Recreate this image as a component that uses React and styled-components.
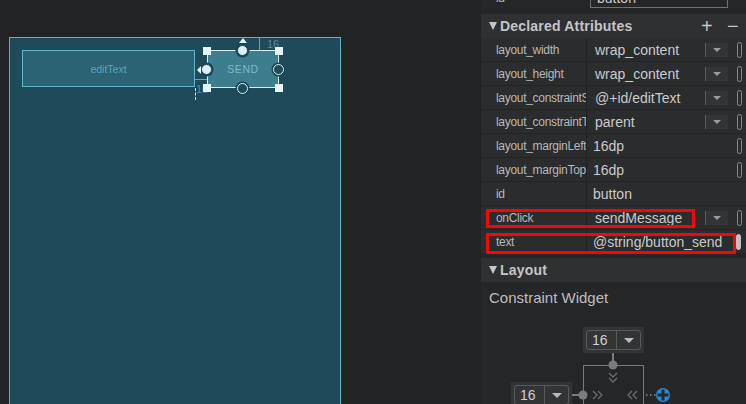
import React from "react";
import styled, { createGlobalStyle } from "styled-components";

const Global = createGlobalStyle`
  html, body { margin: 0; padding: 0; background: #222325; overflow: hidden; }
  body { font-family: "Liberation Sans", Arial, sans-serif; }
`;

const Page = styled.div`
  display: flex;
  width: 746px;
  height: 404px;
  overflow: hidden;
`;

const CanvasArea = styled.div`
  width: 481px;
  flex: none;
  background: #222325;
  padding: 37px 0 0 9px;
  box-sizing: border-box;
`;

const Blueprint = styled.div`
  position: relative;
  width: 332px;
  height: 400px;
  background: #1e4a5a;
  border: 1px solid #5db3c8;
  box-sizing: border-box;
`;

const EditText = styled.div`
  position: absolute;
  left: 12px;
  top: 12px;
  width: 173px;
  height: 37px;
  box-sizing: border-box;
  background: #2b6374;
  border: 1px solid #5fb5c9;
  display: flex;
  align-items: center;
  justify-content: center;
  color: #5fa3b6;
  font-size: 10.5px;
`;

const SendButton = styled.div`
  position: absolute;
  left: 197px;
  top: 12px;
  width: 72px;
  height: 38px;
  box-sizing: border-box;
  background: #3d7d8e;
  border: 1.5px solid #d9eef3;
  display: flex;
  align-items: center;
  justify-content: center;
  color: #78bccd;
  font-size: 10.5px;
  letter-spacing: 0.6px;
`;

const Handle = styled.div`
  position: absolute;
  width: 8px;
  height: 8px;
  background: #e4f6fa;
  left: ${(p) => p.x - 4}px;
  top: ${(p) => p.y - 4}px;
`;

const Anchor = styled.div`
  position: absolute;
  width: 11px;
  height: 11px;
  border-radius: 50%;
  box-sizing: border-box;
  left: ${(p) => p.x - 6}px;
  top: ${(p) => p.y - 6}px;
  background: ${(p) => (p.filled ? "#d6f2f8" : "#1e4a5a")};
  border: ${(p) => (p.filled ? "1.5px solid #1c4555" : "1.5px solid #d6f2f8")};
  box-shadow: 0 0 0 1.5px #1c4555;
`;

const CanvasText = styled.div`
  position: absolute;
  left: ${(p) => p.x}px;
  top: ${(p) => p.y}px;
  color: #4f8fa2;
  font-size: 11px;
  line-height: 11px;
`;

const Line = styled.div`
  position: absolute;
  left: ${(p) => p.x}px;
  top: ${(p) => p.y}px;
  width: ${(p) => p.w}px;
  height: ${(p) => p.h}px;
  background: ${(p) => p.c || "#5fa9bd"};
`;

const DashedV = styled.div`
  position: absolute;
  left: 185px;
  top: 50px;
  height: 12px;
  border-left: 1px dashed #cfe9ef;
`;

const Panel = styled.div`
  flex: 1;
  min-width: 0;
  background: #252628;
  display: flex;
  flex-direction: column;
  margin-top: -14px;
`;

const Row = styled.div`
  position: relative;
  display: flex;
  align-items: center;
  height: 24px;
  box-sizing: border-box;
  background: #2b2c2e;
  border-bottom: 1px solid #222325;
`;

const IdRow = styled(Row)`
  background: #252628;
  border-bottom: none;
  margin-bottom: 4px;
`;

const Label = styled.div`
  width: 106px;
  flex: none;
  box-sizing: border-box;
  padding-left: 15px;
  height: 100%;
  display: flex;
  align-items: center;
  border-right: 1px solid ${(p) => (p.plain ? "transparent" : "#1f2022")};
  color: #b6b7b9;
  font-size: 12px;
  letter-spacing: -0.3px;
  white-space: nowrap;
  overflow: hidden;
`;

const Value = styled.div`
  flex: 1;
  min-width: 0;
  overflow: hidden;
  padding-left: ${(p) => (p.tight ? 6 : 8)}px;
  color: #c9cacc;
  font-size: 14px;
  white-space: nowrap;
`;

const InputBox = styled.div`
  width: 138px;
  height: 20px;
  flex: none;
  box-sizing: border-box;
  border: 1px solid #707173;
  margin-left: 3px;
  color: #c9cacc;
  font-size: 14px;
  padding-left: 6px;
  display: flex;
  align-items: center;
`;

const Dropdown = styled.div`
  width: 22px;
  height: 14px;
  flex: none;
  background: #333436;
  border-left: 1px solid #5a5b5d;
  display: flex;
  align-items: center;
  justify-content: center;
  margin-right: 9px;
  &::after {
    content: "";
    border-left: 4px solid transparent;
    border-right: 4px solid transparent;
    border-top: 4px solid #9a9b9d;
  }
`;

const Pill = styled.div`
  width: 5px;
  height: 16px;
  flex: none;
  box-sizing: border-box;
  border-radius: 3px;
  border: 1px solid ${(p) => (p.solid ? "#c0c1c3" : "#8b8c8e")};
  background: ${(p) => (p.solid ? "#c0c1c3" : "transparent")};
  margin-right: ${(p) => (p.solid ? 5 : 4)}px;
`;

const Spacer = styled.div`
  width: ${(p) => p.w}px;
  flex: none;
`;

const Highlight = styled.div`
  position: absolute;
  left: 5px;
  top: ${(p) => p.top}px;
  width: ${(p) => p.w}px;
  height: ${(p) => p.h}px;
  box-sizing: border-box;
  border: 3px solid #ee0a0a;
  pointer-events: none;
`;

const SectionHeader = styled.div`
  display: flex;
  align-items: center;
  height: 24px;
  flex: none;
  background: #2f3032;
  padding-left: 8px;
  color: #c4c5c7;
  font-size: 14px;
  font-weight: bold;
  letter-spacing: 0.2px;
`;

const Caret = styled.span`
  width: 0;
  height: 0;
  border-left: 4.5px solid transparent;
  border-right: 4.5px solid transparent;
  border-top: 8px solid #c4c5c7;
  margin-right: 3px;
`;

const HeaderTitle = styled.span`
  flex: 1;
`;

const HeaderAction = styled.span`
  font-weight: normal;
  font-size: 20px;
  color: #c4c5c7;
  width: 26px;
  text-align: center;
  line-height: 20px;
`;

const Gap = styled.div`
  height: ${(p) => p.h}px;
  flex: none;
`;

const SubTitle = styled.div`
  padding: 7px 0 0 8px;
  color: #bdbec0;
  font-size: 15px;
  height: 26px;
  flex: none;
  box-sizing: border-box;
`;

const Widget = styled.div`
  position: relative;
  flex: 1;
`;

const ComboFrame = styled.div`
  position: absolute;
  left: ${(p) => p.x}px;
  top: ${(p) => p.y}px;
  width: 61px;
  height: 26px;
  background: #333436;
  padding: 3px;
  box-sizing: border-box;
`;

const Combo = styled.div`
  display: flex;
  height: 100%;
  border: 1px solid #58595b;
  border-radius: 3px;
  box-sizing: border-box;
  color: #cfd0d2;
  font-size: 14px;
`;

const ComboText = styled.div`
  width: 30px;
  padding-left: 5px;
  box-sizing: border-box;
  display: flex;
  align-items: center;
  border-right: 1px solid #58595b;
`;

const ComboArrow = styled.div`
  flex: 1;
  display: flex;
  align-items: center;
  justify-content: center;
  &::after {
    content: "";
    border-left: 5px solid transparent;
    border-right: 5px solid transparent;
    border-top: 5px solid #b9babc;
  }
`;

const WidgetSvg = styled.svg`
  position: absolute;
  left: 0;
  top: 0;
`;

const rows = [
  { label: "layout_width", value: "wrap_content", dd: true },
  { label: "layout_height", value: "wrap_content", dd: true },
  { label: "layout_constraintStart_toEndOf", value: "@+id/editText", dd: true },
  { label: "layout_constraintTop_toTopOf", value: "parent", dd: true },
  { label: "layout_marginLeft", value: "16dp", tight: true, gap: 31 },
  { label: "layout_marginTop", value: "16dp", tight: true, gap: 31 },
  { label: "id", value: "button", tight: true, none: true },
  { label: "onClick", value: "sendMessage", dd: true, hl: { top: 3, w: 209, h: 19 } },
  { label: "text", value: "@string/button_send", tight: true, solid: true, gap: 4, hl: { top: 3, w: 250, h: 21 } },
];

function ComboBox({ x, y }) {
  return (
    <ComboFrame x={x} y={y}>
      <Combo>
        <ComboText>16</ComboText>
        <ComboArrow />
      </Combo>
    </ComboFrame>
  );
}

export default function App() {
  return (
    <Page>
      <Global />
      <CanvasArea>
        <Blueprint>
          <EditText>editText</EditText>
          <Line x={249} y={0} w={1} h={12} c="#5fa9bd" />
          <CanvasText x={257} y={1}>16</CanvasText>
          <Line x={185} y={41} w={12} h={1} c="#5fa9bd" />
          <CanvasText x={186} y={46}>16</CanvasText>
          <DashedV />
          <SendButton>SEND</SendButton>
          <Handle x={197} y={13} />
          <Handle x={269} y={13} />
          <Handle x={197} y={50} />
          <Handle x={269} y={50} />
          <Anchor x={233} y={13} filled />
          <Anchor x={197} y={32} filled />
          <Anchor x={269} y={32} />
          <Anchor x={233} y={51} />
          <svg width="332" height="120" style={{ position: "absolute", left: 0, top: 0 }}>
            <polygon points="229,5 237,5 233,0" fill="#e4f6fa" />
            <polygon points="187,32 191,28 191,36" fill="#e4f6fa" />
          </svg>
        </Blueprint>
      </CanvasArea>
      <Panel>
        <IdRow>
          <Label plain>id</Label>
          <InputBox>button</InputBox>
        </IdRow>
        <SectionHeader>
          <Caret />
          <HeaderTitle>Declared Attributes</HeaderTitle>
          <HeaderAction>+</HeaderAction>
          <HeaderAction>−</HeaderAction>
        </SectionHeader>
        {rows.map((r) => (
          <Row key={r.label}>
            <Label>{r.label}</Label>
            <Value tight={r.tight}>{r.value}</Value>
            {r.dd && <Dropdown />}
            {r.gap && <Spacer w={r.gap} />}
            {r.none ? <Spacer w={9} /> : <Pill solid={r.solid} />}
            {r.hl && <Highlight top={r.hl.top} w={r.hl.w} h={r.hl.h} />}
          </Row>
        ))}
        <Gap h={4} />
        <SectionHeader>
          <Caret />
          <HeaderTitle>Layout</HeaderTitle>
        </SectionHeader>
        <SubTitle>Constraint Widget</SubTitle>
        <Widget>
          <WidgetSvg width="265" height="120">
            <line x1="132" y1="43" x2="132" y2="57" stroke="#7a7b7d" strokeWidth="2" />
            <rect x="102.5" y="57.5" width="60" height="80" fill="none" stroke="#7a7b7d" strokeWidth="1" />
            <circle cx="132" cy="57" r="4.5" fill="#7a7b7d" />
            <polyline points="128,65 132,69 136,65" fill="none" stroke="#6b6c6e" strokeWidth="1.3" />
            <polyline points="128,70 132,74 136,70" fill="none" stroke="#6b6c6e" strokeWidth="1.3" />
            <line x1="89" y1="87" x2="102" y2="87" stroke="#7a7b7d" strokeWidth="2" />
            <circle cx="102" cy="87" r="4.5" fill="#7a7b7d" />
            <polyline points="112,83 116,87 112,91" fill="none" stroke="#6b6c6e" strokeWidth="1.3" />
            <polyline points="117,83 121,87 117,91" fill="none" stroke="#6b6c6e" strokeWidth="1.3" />
            <polyline points="151,83 147,87 151,91" fill="none" stroke="#6b6c6e" strokeWidth="1.3" />
            <polyline points="156,83 152,87 156,91" fill="none" stroke="#6b6c6e" strokeWidth="1.3" />
            <line x1="165" y1="87" x2="176" y2="87" stroke="#8a8b8d" strokeWidth="1.5" strokeDasharray="1.5 2.5" />
            <circle cx="182" cy="87" r="7" fill="#2f86c8" />
            <rect x="176.5" y="85.5" width="11" height="3" fill="#1d2b36" />
            <rect x="180.5" y="81.5" width="3" height="11" fill="#1d2b36" />
          </WidgetSvg>
          <ComboBox x={102} y={19} />
          <ComboBox x={30} y={74} />
        </Widget>
      </Panel>
    </Page>
  );
}
